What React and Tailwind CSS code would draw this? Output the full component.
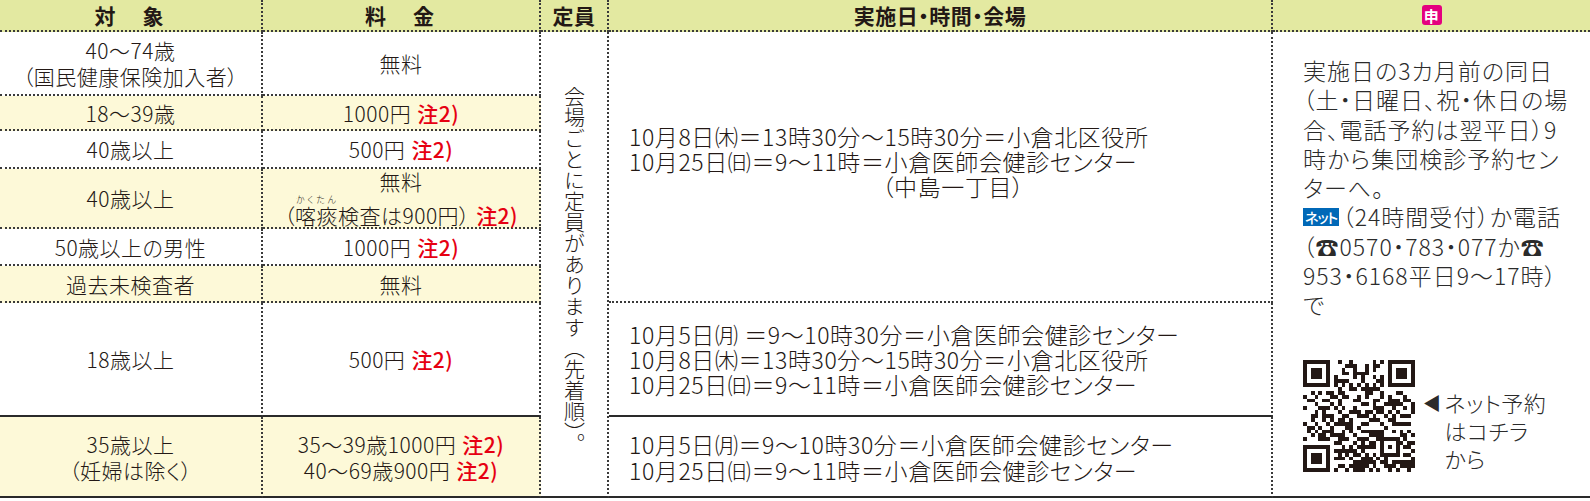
import React from 'react';

// QR code modules (version 3, 29x29), drawn as one svg path
const QR_SIZE = 29;

function buildQr() {
  let seed = 1005;
  const rand = () => {
    seed = (seed * 1103515245 + 12345) & 0x7fffffff;
    return seed / 0x7fffffff;
  };
  const grid = [];
  for (let r = 0; r < QR_SIZE; r++) {
    const row = [];
    for (let c = 0; c < QR_SIZE; c++) row.push(rand() > 0.52);
    grid.push(row);
  }
  const finder = (or, oc) => {
    for (let r = -1; r <= 7; r++) {
      for (let c = -1; c <= 7; c++) {
        const rr = or + r;
        const cc = oc + c;
        if (rr < 0 || cc < 0 || rr >= QR_SIZE || cc >= QR_SIZE) continue;
        const inside = r >= 0 && r <= 6 && c >= 0 && c <= 6;
        grid[rr][cc] =
          inside &&
          (r === 0 || r === 6 || c === 0 || c === 6 || (r >= 2 && r <= 4 && c >= 2 && c <= 4));
      }
    }
  };
  finder(0, 0);
  finder(0, QR_SIZE - 7);
  finder(QR_SIZE - 7, 0);
  for (let i = 8; i < QR_SIZE - 8; i++) {
    grid[6][i] = i % 2 === 0;
    grid[i][6] = i % 2 === 0;
  }
  // alignment pattern
  for (let r = -2; r <= 2; r++) {
    for (let c = -2; c <= 2; c++) {
      grid[22 + r][22 + c] = Math.abs(r) === 2 || Math.abs(c) === 2 || (r === 0 && c === 0);
    }
  }
  let d = '';
  grid.forEach((row, r) =>
    row.forEach((on, c) => {
      if (on) d += `M${c} ${r}h1v1h-1z`;
    })
  );
  return d;
}

const QR_PATH = buildQr();

function QrCode() {
  return (
    <svg width="112" height="112" viewBox="0 0 29 29" shapeRendering="crispEdges" className="shrink-0">
      <path d={QR_PATH} fill="#231815" />
    </svg>
  );
}

function Note() {
  return <span className="ml-[6px] font-medium text-[#e60012]">注2)</span>;
}

const head =
  'flex items-center justify-center bg-[#e3e9a1] border-b-2 border-dotted border-[#3a3a3a] font-bold text-[21px] leading-none';

export default function App() {
  return (
    <div className="w-[1590px] h-[501px] bg-white text-[#231815] font-light font-['Noto_Sans_CJK_JP','Noto_Sans',sans-serif] [font-feature-settings:'palt']">
      <div className="grid grid-cols-[263px_278px_68px_664px_317px] grid-rows-[32px_64px_35px_38px_60px_37px_37px_114px_81px] text-[21px] leading-[26px] tracking-[0.5px]">
        {/* header */}
        <div className={`${head} border-r-2 tracking-[3px]`}>対　象</div>
        <div className={`${head} border-r-2 tracking-[3px]`}>料　金</div>
        <div className={`${head} border-r-2`}>定員</div>
        <div className={`${head} border-r-2`}>実施日・時間・会場</div>
        <div className={head}>
          <span className="flex h-[20px] w-[20px] items-center justify-center rounded-[3px] bg-[#e4007f] text-[15px] font-bold text-white">
            申
          </span>
        </div>

        {/* row 1 */}
        <div className="col-start-1 row-start-2 flex flex-col items-center justify-center border-r-2 border-b-2 border-dotted border-[#3a3a3a]">
          <div>40～74歳</div>
          <div>（国民健康保険加入者）</div>
        </div>
        <div className="col-start-2 row-start-2 flex items-center justify-center border-r-2 border-b-2 border-dotted border-[#3a3a3a]">
          無料
        </div>

        {/* row 2 */}
        <div className="col-start-1 row-start-3 flex items-center justify-center bg-[#fdf9d8] border-r-2 border-b-2 border-dotted border-[#3a3a3a]">
          18～39歳
        </div>
        <div className="col-start-2 row-start-3 flex items-center justify-center bg-[#fdf9d8] border-r-2 border-b-2 border-dotted border-[#3a3a3a]">
          1000円<Note />
        </div>

        {/* row 3 */}
        <div className="col-start-1 row-start-4 flex items-center justify-center border-r-2 border-b-2 border-dotted border-[#3a3a3a]">
          40歳以上
        </div>
        <div className="col-start-2 row-start-4 flex items-center justify-center border-r-2 border-b-2 border-dotted border-[#3a3a3a]">
          500円<Note />
        </div>

        {/* row 4 */}
        <div className="col-start-1 row-start-5 flex items-center justify-center bg-[#fdf9d8] border-r-2 border-b-2 border-dotted border-[#3a3a3a]">
          40歳以上
        </div>
        <div className="col-start-2 row-start-5 flex flex-col items-center justify-center bg-[#fdf9d8] border-r-2 border-b-2 border-dotted border-[#3a3a3a] leading-[27px]">
          <div>無料</div>
          <div>
            （
            <ruby>
              喀痰<rt className="text-[9px] leading-none tracking-[1px]">かくたん</rt>
            </ruby>
            検査は900円）<Note />
          </div>
        </div>

        {/* row 5 */}
        <div className="col-start-1 row-start-6 flex items-center justify-center border-r-2 border-b-2 border-dotted border-[#3a3a3a]">
          50歳以上の男性
        </div>
        <div className="col-start-2 row-start-6 flex items-center justify-center border-r-2 border-b-2 border-dotted border-[#3a3a3a]">
          1000円<Note />
        </div>

        {/* row 6 */}
        <div className="col-start-1 row-start-7 flex items-center justify-center bg-[#fdf9d8] border-r-2 border-b-2 border-dotted border-[#3a3a3a]">
          過去未検査者
        </div>
        <div className="col-start-2 row-start-7 flex items-center justify-center bg-[#fdf9d8] border-r-2 border-b-2 border-dotted border-[#3a3a3a]">
          無料
        </div>

        {/* row 7 */}
        <div className="col-start-1 row-start-8 flex items-center justify-center border-r-2 border-b-2 border-dotted border-[#3a3a3a] [border-bottom-style:solid] border-b-[#2a2a2a]">
          18歳以上
        </div>
        <div className="col-start-2 row-start-8 flex items-center justify-center border-r-2 border-b-2 border-dotted border-[#3a3a3a] [border-bottom-style:solid] border-b-[#2a2a2a]">
          500円<Note />
        </div>

        {/* row 8 */}
        <div className="col-start-1 row-start-9 flex flex-col items-center justify-center bg-[#fdf9d8] border-r-2 border-b-2 border-dotted border-[#3a3a3a] [border-bottom-style:solid] border-b-[#2a2a2a]">
          <div>35歳以上</div>
          <div>（妊婦は除く）</div>
        </div>
        <div className="col-start-2 row-start-9 flex flex-col items-center justify-center bg-[#fdf9d8] border-r-2 border-b-2 border-dotted border-[#3a3a3a] [border-bottom-style:solid] border-b-[#2a2a2a]">
          <div>
            35～39歳1000円<Note />
          </div>
          <div>
            40～69歳900円<Note />
          </div>
        </div>

        {/* 定員 */}
        <div className="col-start-3 row-start-2 row-span-8 flex items-center justify-center border-r-2 border-b-2 border-dotted border-[#3a3a3a] [border-bottom-style:solid] border-b-[#2a2a2a]">
          <div className="mt-[12px] [writing-mode:vertical-rl] [font-feature-settings:normal] text-[21px] leading-[21px] tracking-normal">
            会場ごとに定員があります（先着順）。
          </div>
        </div>

        {/* 実施日・時間・会場 */}
        <div className="col-start-4 row-start-2 row-span-6 flex flex-col justify-center pl-[20px] pb-[10px] border-r-2 border-b-2 border-dotted border-[#3a3a3a] text-[23px] leading-[25px] tracking-[0.6px] whitespace-nowrap">
          <div>10月8日㈭＝13時30分～15時30分＝小倉北区役所</div>
          <div>10月25日㈰＝9～11時＝小倉医師会健診センター</div>
          <div className="pl-[253px]">（中島一丁目）</div>
        </div>
        <div className="col-start-4 row-start-8 flex flex-col justify-center pl-[20px] border-r-2 border-b-2 border-dotted border-[#3a3a3a] [border-bottom-style:solid] border-b-[#2a2a2a] text-[23px] leading-[25px] tracking-[0.6px] whitespace-nowrap">
          <div>10月5日㈪ ＝9～10時30分＝小倉医師会健診センター</div>
          <div>10月8日㈭＝13時30分～15時30分＝小倉北区役所</div>
          <div>10月25日㈰＝9～11時＝小倉医師会健診センター</div>
        </div>
        <div className="col-start-4 row-start-9 flex flex-col justify-center pl-[20px] border-r-2 border-b-2 border-dotted border-[#3a3a3a] [border-bottom-style:solid] border-b-[#2a2a2a] text-[23px] leading-[26px] tracking-[0.6px] whitespace-nowrap">
          <div>10月5日㈪＝9～10時30分＝小倉医師会健診センター</div>
          <div>10月25日㈰＝9～11時＝小倉医師会健診センター</div>
        </div>

        {/* 申込 */}
        <div className="col-start-5 row-start-2 row-span-8 flex flex-col pl-[30px] pt-[24px] border-b-2 border-solid border-[#2a2a2a] text-[23px] leading-[29.3px] tracking-[1px] text-[#2b2b2b] whitespace-nowrap">
          <div>実施日の3カ月前の同日</div>
          <div>（土・日曜日、祝・休日の場</div>
          <div>合、電話予約は翌平日）9</div>
          <div>時から集団検診予約セン</div>
          <div>ターへ。</div>
          <div className="flex items-center">
            <span className="mr-[3px] inline-flex h-[18px] items-center bg-[#0068b7] px-[2px] text-[14px] font-medium leading-none tracking-[-1px] text-white">
              ネット
            </span>
            （24時間受付）か電話
          </div>
          <div>（☎0570・783・077か☎</div>
          <div>953・6168平日9～17時）</div>
          <div>で</div>
          <div className="mt-[40px] flex items-end">
            <QrCode />
            <div className="ml-[8px] flex text-[22px] leading-[28px] tracking-[0.5px]">
              <span className="mr-[3px] text-[18px]">◀</span>
              <div>
                <div>ネット予約</div>
                <div>はコチラ</div>
                <div>から</div>
              </div>
            </div>
          </div>
        </div>
      </div>
    </div>
  );
}
